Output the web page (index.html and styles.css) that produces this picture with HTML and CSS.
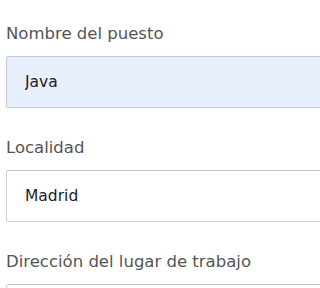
FILE: index.html
```html
<!DOCTYPE html>
<html lang="es">
<head>
<meta charset="utf-8">
<link rel="stylesheet" href="styles.css">
</head>
<body>
<form class="form">
  <div class="field">
    <label class="label" for="puesto">Nombre del puesto</label>
    <input class="input input-filled" id="puesto" type="text" value="Java">
  </div>
  <div class="field">
    <label class="label" for="localidad">Localidad</label>
    <input class="input" id="localidad" type="text" value="Madrid">
  </div>
  <div class="field">
    <label class="label" for="direccion">Dirección del lugar de trabajo</label>
    <input class="input" id="direccion" type="text" value="">
  </div>
</form>
</body>
</html>
```
FILE: styles.css
```css
html, body {
  margin: 0;
  padding: 0;
  background: #ffffff;
  overflow: hidden;
}
body {
  font-family: "DejaVu Sans", Inter, sans-serif;
}
.form {
  display: flex;
  flex-direction: column;
  gap: 30px;
  padding: 24px 0 0 6px;
  width: 340px;
}
.field {
  display: flex;
  flex-direction: column;
  gap: 12px;
}
.label {
  font-size: 16.5px;
  line-height: 20px;
  color: #545454;
}
.input {
  box-sizing: border-box;
  height: 52px;
  width: 100%;
  margin: 0;
  padding: 0 18px;
  font-family: "DejaVu Sans", Inter, sans-serif;
  font-size: 15.5px;
  color: #222222;
  background: #ffffff;
  border: 1px solid #cfcfcf;
  border-top-color: #c4c4c4;
  border-radius: 2px;
  outline: none;
}
.input-filled {
  background: #e8f0fe;
  border-color: #c3c8d0;
}
```
